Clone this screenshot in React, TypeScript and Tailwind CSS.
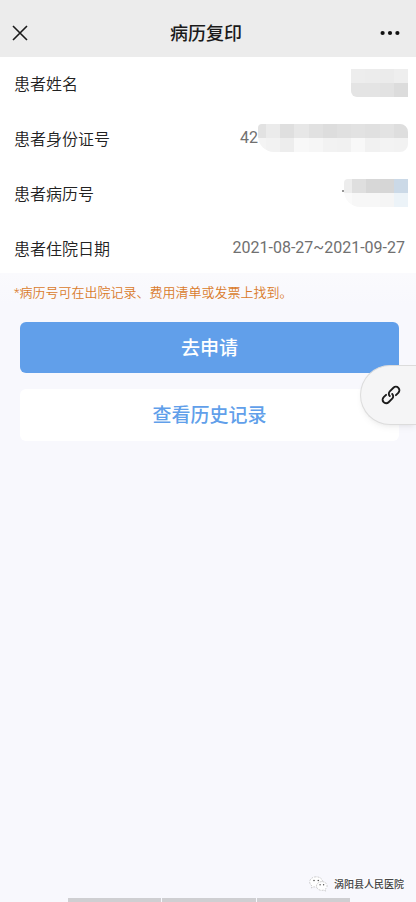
import React from "react";

const idCells = [
  ["bg-[#e2e2e2]", "bg-[#f4f4f4]"],
  ["bg-[#ebebeb]", "bg-[#f2f2f2]"],
  ["bg-[#dfdfdf]", "bg-[#ededed]"],
  ["bg-[#e7e7e7]", "bg-[#f8f8f8]"],
  ["bg-[#e1e1e1]", "bg-[#f6f6f6]"],
  ["bg-[#dddddd]", "bg-[#f2f2f2]"],
  ["bg-[#e0e0e0]", "bg-[#f1f1f1]"],
  ["bg-[#e2e2e2]", "bg-[#f8f8f8]"],
  ["bg-[#e0e0e0]", "bg-[#f1f1f1]"],
  ["bg-[#e3e3e3]", "bg-[#f3f3f3]"],
  ["bg-[#dedede]", "bg-[#f2f2f2]"],
];

const nameCells = [
  ["bg-[#ededed]", "bg-[#e4e4e4]"],
  ["bg-[#ececec]", "bg-[#e4e4e4]"],
  ["bg-[#ebebeb]", "bg-[#e2e2e2]"],
  ["bg-[#eeeeee]", "bg-[#dcdcdc]"],
];

const recordCells = [
  ["bg-[#ededed]", "bg-[#fafafa]"],
  ["bg-[#dfdfdf]", "bg-[#f7f7f7]"],
  ["bg-[#d7d7d7]", "bg-[#f7f7f7]"],
  ["bg-[#d6d6d6]", "bg-[#f5f5f5]"],
  ["bg-[#cbd9e7]", "bg-[#ecf3f8]"],
];

function Mosaic({
  cells,
  className,
  narrowFirst = false,
}: {
  cells: string[][];
  className: string;
  narrowFirst?: boolean;
}) {
  return (
    <div className={`flex h-7 overflow-hidden ${className}`} aria-hidden="true">
      {cells.map(([top, bottom], i) => (
        <div key={i} className={`flex flex-col ${narrowFirst && i === 0 ? "w-2" : "flex-1"}`}>
          <div className={`flex-1 ${top}`} />
          <div className={`flex-1 ${bottom}`} />
        </div>
      ))}
    </div>
  );
}

function Row({ label, children }: { label: string; children: React.ReactNode }) {
  return (
    <div className="flex h-[50px] items-center justify-between pl-[14px]">
      <dt className="pt-[3px] text-[16px] leading-6 font-[350] text-[#222222]">{label}</dt>
      <dd className="flex items-center text-[16px] leading-6 text-[#707070]">{children}</dd>
    </div>
  );
}

export default function App() {
  return (
    <div className="relative flex min-h-screen flex-col bg-[#f8f8fd] font-[Roboto,'Noto_Sans_CJK_SC',sans-serif]">
      <header className="flex h-[57px] items-center justify-between bg-[#ececec] pt-2 pr-4 pl-3">
        <button type="button" aria-label="关闭" className="flex w-6">
          <svg width="16" height="16" viewBox="0 0 16 16" fill="none" stroke="#1a1a1a" strokeWidth="1.6">
            <path d="M1 1 15 15M15 1 1 15" />
          </svg>
        </button>
        <h1 className="pt-[3px] text-[18px] leading-6 font-medium text-[#1a1a1a]">病历复印</h1>
        <button type="button" aria-label="更多" className="flex w-6 justify-end">
          <svg width="20" height="6" viewBox="0 0 20 6" fill="#111111">
            <circle cx="2.6" cy="3" r="2.1" />
            <circle cx="10" cy="3" r="2.1" />
            <circle cx="17.4" cy="3" r="2.1" />
          </svg>
        </button>
      </header>

      <main>
        <dl className="flex flex-col gap-[5px] bg-white pt-px">
          <Row label="患者姓名">
            <Mosaic cells={nameCells} className="mr-2 w-[57px] rounded-bl-md" />
          </Row>
          <Row label="患者身份证号">
            <span>42</span>
            <Mosaic cells={idCells} narrowFirst className="mr-2 w-[150px] rounded-tl-sm rounded-r-lg rounded-bl-2xl" />
          </Row>
          <Row label="患者病历号">
            <span className="mb-1 h-0.5 w-0.5 bg-[#999999]" />
            <Mosaic cells={recordCells} narrowFirst className="mr-2 w-16 rounded-tl-sm rounded-bl-2xl" />
          </Row>
          <Row label="患者住院日期">
            <span className="mr-[11px]">2021-08-27~2021-09-27</span>
          </Row>
        </dl>

        <p className="bg-linear-to-b from-[#fafafd] to-[#f8f8fd] px-[14px] pt-2 text-[13px] leading-6 font-[350] whitespace-nowrap text-[#d97b2b]">
          *病历号可在出院记录、费用清单或发票上找到。
        </p>

        <div className="mt-[17px] flex flex-col gap-4 pr-[17px] pl-5">
          <button type="button" className="h-[51px] rounded-md bg-[#619fea] pt-[3px] text-[19px] font-medium text-white">
            去申请
          </button>
          <button type="button" className="h-[52px] rounded-md bg-white pt-[3px] text-[19px] font-medium text-[#619fea]">
            查看历史记录
          </button>
        </div>
      </main>

      <button
        type="button"
        aria-label="链接"
        className="absolute top-[365px] right-0 flex h-[60px] w-14 items-center rounded-l-full border border-r-0 border-[#dcdcdc] bg-[#f5f5f6] pl-5 shadow-md shadow-black/5"
      >
        <svg width="20" height="20" viewBox="0 0 20 20" fill="none" stroke="#1c1c1c" strokeWidth="1.9" strokeLinecap="round">
          <path d="M14.9 10.200 17.300 7.800A3.300 3.300 0 0 0 12.400 2.700L8.800 6.300A3.300 3.300 0 0 0 8.800 11" />
          <path d="M5.100 9.800 2.700 12.200A3.300 3.300 0 0 0 7.600 17.300L11.200 13.700A3.300 3.300 0 0 0 11.200 9" />
        </svg>
      </button>

      <footer className="mt-auto">
        <div className="flex items-center justify-end gap-[6px] pr-3 pb-[3px]">
          <svg width="19" height="16" viewBox="0 0 19 16" fill="#ffffff" stroke="#b0b0b0" strokeWidth="0.6" strokeDasharray="2 1">
            <path d="M7.2.8C3.5.8.7 3 .7 6c0 1.700 1 3.100 2.400 4.100L2.500 12l2.300-1.200c.8.2 1.600.3 2.400.3 3.700 0 6.500-2.200 6.500-5.100S10.900.8 7.200.8Z" />
            <path d="M12.800 5.600c-3 0-5.300 1.900-5.300 4.400s2.300 4.400 5.300 4.400c.7 0 1.300-.1 1.900-.3l1.800 1-.5-1.700c1.300-.8 2.100-2 2.100-3.400 0-2.500-2.300-4.400-5.300-4.400Z" />
            <g fill="#555555" stroke="none">
              <circle cx="5" cy="4.500" r=".8" />
              <circle cx="9.300" cy="4.500" r=".8" />
              <circle cx="11.100" cy="8.700" r=".7" />
              <circle cx="14.600" cy="8.700" r=".7" />
            </g>
          </svg>
          <span className="pt-0.5 text-[10px] leading-5 font-medium text-[#444444] [text-shadow:-1px_-1px_0_#ffffff]">涡阳县人民医院</span>
        </div>
        <div className="mr-[66px] ml-[68px] flex h-1 gap-px">
          <div className="flex-1 bg-[#cfcfd2]" />
          <div className="flex-1 bg-[#cfcfd2]" />
          <div className="flex-1 bg-[#cfcfd2]" />
        </div>
      </footer>
    </div>
  );
}
